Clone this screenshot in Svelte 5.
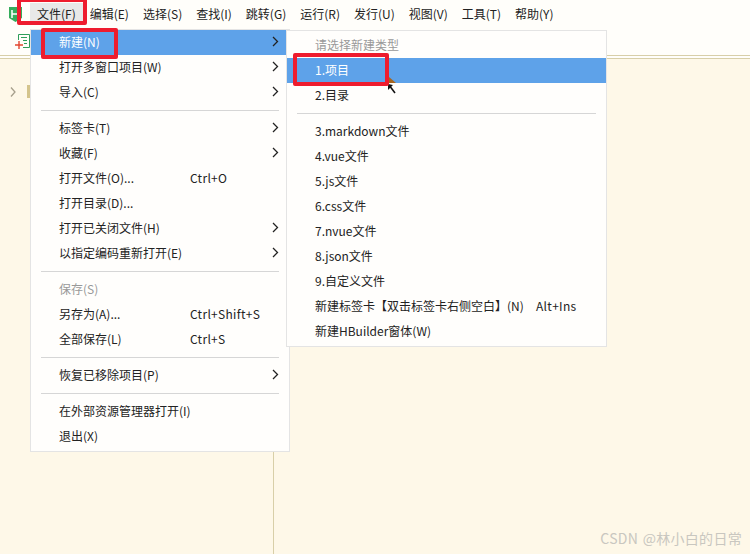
<script>
  const top = ['文件(F)', '编辑(E)', '选择(S)', '查找(I)', '跳转(G)', '运行(R)', '发行(U)', '视图(V)', '工具(T)', '帮助(Y)'];
  const main = [
    { t: '新建(N)', arrow: true, active: true },
    { t: '打开多窗口项目(W)', arrow: true },
    { t: '导入(C)', arrow: true },
    { sep: true },
    { t: '标签卡(T)', arrow: true },
    { t: '收藏(F)', arrow: true },
    { t: '打开文件(O)...', key: 'Ctrl+O' },
    { t: '打开目录(D)...' },
    { t: '打开已关闭文件(H)', arrow: true },
    { t: '以指定编码重新打开(E)', arrow: true },
    { sep: true },
    { t: '保存(S)', muted: true },
    { t: '另存为(A)...', key: 'Ctrl+Shift+S' },
    { t: '全部保存(L)', key: 'Ctrl+S' },
    { sep: true },
    { t: '恢复已移除项目(P)', arrow: true },
    { sep: true },
    { t: '在外部资源管理器打开(I)' },
    { t: '退出(X)' }
  ];
  const sub = [
    { t: '请选择新建类型', muted: true },
    { t: '1.项目', active: true },
    { t: '2.目录' },
    { sep: true },
    { t: '3.markdown文件' },
    { t: '4.vue文件' },
    { t: '5.js文件' },
    { t: '6.css文件' },
    { t: '7.nvue文件' },
    { t: '8.json文件' },
    { t: '9.自定义文件' },
    { t: '新建标签卡【双击标签卡右侧空白】(N)', key: 'Alt+Ins' },
    { t: '新建HBuilder窗体(W)' }
  ];
</script>

{#snippet rows(list)}
  {#each list as it}
    {#if it.sep}
      <div class="sep"></div>
    {:else}
      <div class="item" class:active={it.active} class:muted={it.muted}>
        <span class="label">{it.t}</span>
        {#if it.key}<span class="key">{it.key}</span>{/if}
        {#if it.arrow}
          <svg class="arrow" width="7" height="11" viewBox="0 0 7 11"><path d="M1 1l4.500 4.500L1 10" fill="none" stroke="currentColor" stroke-width="1.300"/></svg>
        {/if}
      </div>
    {/if}
  {/each}
{/snippet}

<div class="app">
  <header class="menubar">
    <svg class="logo" width="13" height="15" viewBox="0 0 13 15"><path d="M0 0h13v11l-6.500 4L0 11z" fill="#35ad5c"/><path d="M3 3v8M9 3v8M3 7h6" stroke="#fff" stroke-width="1.500" fill="none"/></svg>
    <nav class="tops">
      {#each top as m, i}
        <span class="top" class:open={i === 0}>{m}</span>
      {/each}
    </nav>
  </header>
  <div class="toolbar">
    <svg width="15" height="17" viewBox="0 0 15 17"><path d="M3.500 7V1.500h11v13H8" fill="none" stroke="#2f9e5b"/><path d="M6 4.500h6M8 7.500h4M9 10.500h3" stroke="#2f9e5b"/><path d="M0 12h8M4 8v8" stroke="#e2452f" stroke-width="1.400"/></svg>
  </div>
  <main class="content">
    <div class="tree">
      <svg width="6" height="10" viewBox="0 0 6 10"><path d="M1 .5l4 4.500-4 4.500" fill="none" stroke="#a69f8c" stroke-width="1.300"/></svg>
      <span class="folder"></span>
    </div>
    <div class="divider"></div>
  </main>

  <div class="menu file">{@render rows(main)}</div>
  <div class="menu new">{@render rows(sub)}</div>

  <svg class="cursor" width="14" height="18" viewBox="0 0 14 18">
    <path d="M5 1l7 6H5z" fill="#a5651f"/>
    <path d="M4 8v6l5-5z" fill="#111"/>
    <path d="M5 9l6 8" stroke="#111" stroke-width="1.500" fill="none"/>
  </svg>

  <div class="mark one"></div>
  <div class="mark two"></div>
  <div class="mark three"></div>

  <div class="watermark">CSDN @林小白的日常</div>
</div>

<style>
  :global(body) { margin: 0; }
  .app {
    position: relative;
    width: 750px;
    height: 554px;
    display: flex;
    flex-direction: column;
    overflow: hidden;
    background: #fffefa;
    font: 12px/1 "Noto Sans CJK SC", "Liberation Sans", sans-serif;
    color: #222;
  }
  .menubar {
    height: 28px;
    display: flex;
    align-items: center;
    padding-left: 9px;
    box-sizing: border-box;
  }
  .logo { flex: none; }
  .tops { display: flex; margin-left: 8px; }
  .top {
    padding: 5px 7px;
    white-space: nowrap;
  }
  .top.open { background: #e8e8e8; }
  .toolbar {
    height: 27px;
    display: flex;
    align-items: center;
    padding-left: 15px;
  }
  .content {
    flex: 1;
    position: relative;
    background: #fef8e8;
    border-top: 1px solid #d8cfa8;
  }
  .content::before {
    content: "";
    display: block;
    height: 2px;
    background: #fffefa;
    border-bottom: 1px solid #d8cfa8;
  }
  .tree {
    display: flex;
    align-items: center;
    gap: 11px;
    padding: 26px 0 0 10px;
  }
  .folder {
    width: 5px;
    height: 13px;
    background: #d4c48c;
  }
  .divider {
    position: absolute;
    left: 273px;
    top: 0;
    bottom: 0;
    width: 1px;
    background: #d8cfa8;
  }
  .menu {
    position: absolute;
    box-sizing: border-box;
    background: #fffefc;
    border: 1px solid #e4e4e4;
  }
  .menu.file { left: 30px; top: 29px; width: 260px; padding-bottom: 2px; }
  .menu.new { left: 286px; top: 30px; width: 321px; padding: 2px 0; }
  .item {
    height: 25px;
    box-sizing: border-box;
    display: flex;
    align-items: center;
    position: relative;
    padding: 0 0 2px 28px;
    white-space: nowrap;
  }
  .item.active { background: #5ea2e9; color: #fff; }
  .item.muted { color: #999; }
  .key { position: absolute; left: 159px; letter-spacing: .3px; }
  .new .key { left: 249px; }
  .arrow { position: absolute; right: 10px; color: #222; }
  .sep {
    height: 1px;
    margin: 5px 10px 5px 10px;
    background: #d6d6d6;
  }
  .mark {
    position: absolute;
    box-sizing: border-box;
    border: 4px solid #ee1c2e;
    border-radius: 2px;
  }
  .mark.one { left: 17px; top: -2px; width: 70px; height: 27px; }
  .mark.two { left: 41px; top: 28px; width: 77px; height: 31px; }
  .mark.three { left: 293px; top: 53px; width: 96px; height: 33px; }
  .cursor { position: absolute; left: 384px; top: 76px; }
  .watermark {
    position: absolute;
    right: 8px;
    top: 531px;
    font-size: 14px;
    letter-spacing: .3px;
    word-spacing: 1px;
    color: #c9c7c0;
    white-space: nowrap;
  }
</style>
